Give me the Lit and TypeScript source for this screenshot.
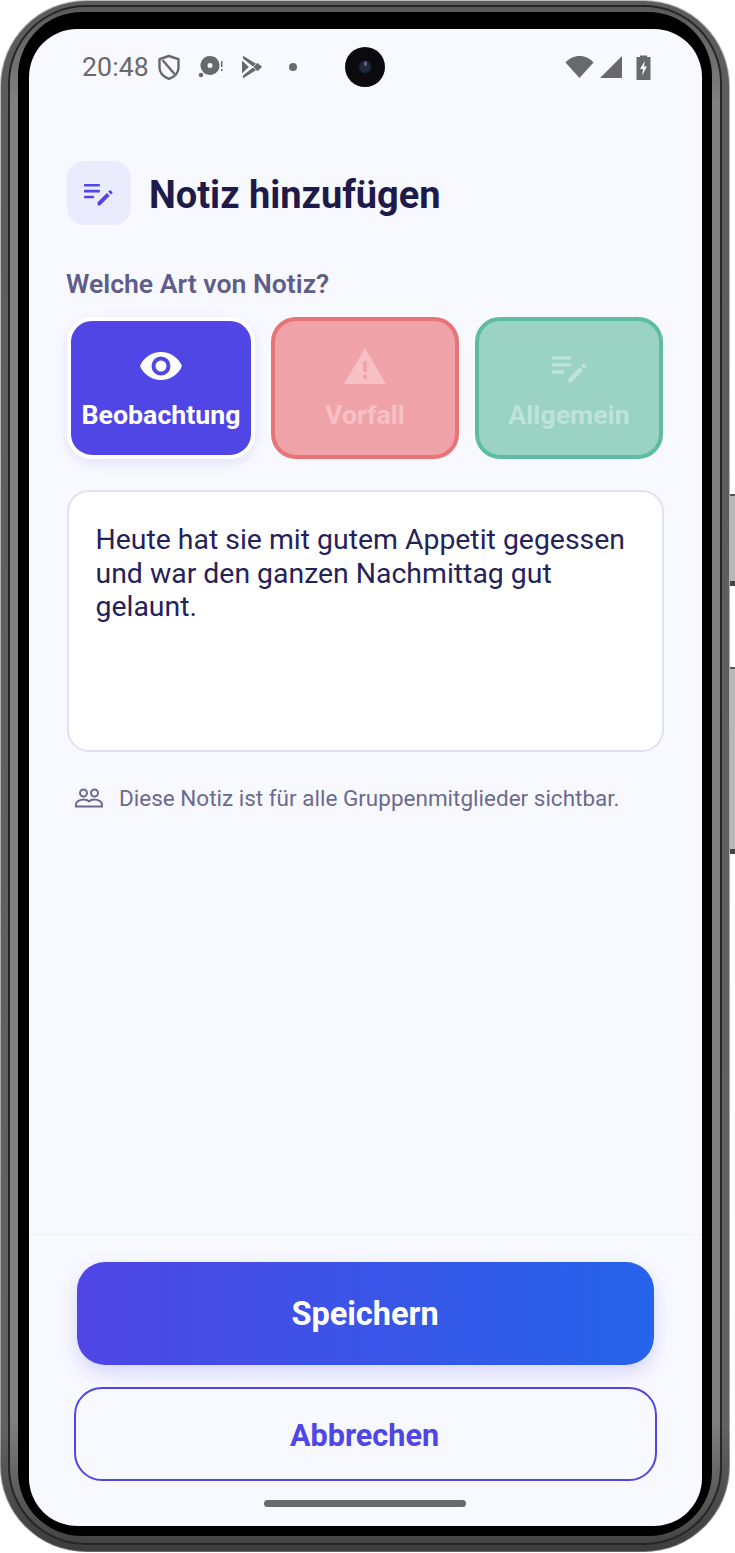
import { LitElement, html, css } from "lit";
import { customElement } from "lit/decorators.js";

const notesIcon = (cls: string) => html`<svg class=${cls} viewBox="0 0 32 25.500" fill="currentColor">
  <rect x="0" y="1" width="17.500" height="3" rx=".6"/><rect x="0" y="7.500" width="17.500" height="3" rx=".6"/><rect x="0" y="14" width="11" height="3" rx=".6"/>
  <path d="M15 24.400v-3l10.300-10.300 3.100 3.100L18 24.600c-.3.3-.6.4-1 .4h-1.500c-.3 0-.5-.3-.5-.6zM26.700 9.700l1.500-1.500c.4-.4 1-.4 1.400 0l1.700 1.700c.4.4.4 1 0 1.400l-1.500 1.500z"/>
</svg>`;

@customElement("app-root")
export class AppRoot extends LitElement {
  static styles = css`
    :host { display: block; width: 735px; height: 1553px; background: #fff; font-family: Roboto, "Liberation Sans", sans-serif; overflow: hidden; position: relative; }
    .phone { box-sizing: border-box; width: 730px; height: 1552px; padding: 1px; border-radius: 86px; background: linear-gradient(#bcbcbc, #a0a0a0 92%, #6a6a6a); }
    .r1 { box-sizing: border-box; height: 100%; padding: 4px 7px 6px; border-radius: 85px; background: linear-gradient(#5c5c5c, #626262 92%, #3c3c3c); }
    .r2 { box-sizing: border-box; height: 100%; padding: 2px; border-radius: 78px; background: #262626; }
    .r3 { box-sizing: border-box; height: 100%; padding: 5px 8px 7px; border-radius: 76px; background: linear-gradient(#5a5a5a, #808080 6%, #808080 92%, #444); }
    .r4 { box-sizing: border-box; height: 100%; padding: 17px 10px 10px 11px; border-radius: 64px; background: #000; }
    .side { position: absolute; left: 730px; width: 5px; background: #b8b8b8; border-top: 2px solid #555; border-bottom: 5px solid #444; box-sizing: border-box; }
    .side.a { top: 494px; height: 92px; }
    .side.b { top: 667px; height: 187px; }
    .screen { position: relative; height: 100%; box-sizing: border-box; border-radius: 48px; background: #f8f9ff; display: flex; flex-direction: column; overflow: hidden; }
    .status { height: 76px; display: flex; align-items: center; padding: 0 51px 0 53px; color: #69696b; flex: none; box-sizing: border-box; }
    .time { font-size: 26.700px; letter-spacing: .1px; width: 76px; }
    .st { display: block; fill: #69696b; flex: none; }
    .st.outline { fill: none; stroke: #69696b; stroke-width: 2.400; }
    .cam { position: absolute; left: 316px; top: 18px; width: 40px; height: 40px; border-radius: 50%; background: radial-gradient(circle at 50% 50%, #1e2a3a 0 5px, #0b0b10 7px, #0a0a0c 100%); }
    .cam::after { content: ""; position: absolute; left: 19px; top: 14px; width: 3px; height: 5px; border-radius: 2px; background: #6a5a8c; }
    .right { margin-left: auto; display: flex; align-items: center; gap: 5px; }
    .main { flex: 1; padding: 0 38px; display: flex; flex-direction: column; }
    .head { display: flex; align-items: center; gap: 19px; margin-top: 56px; }
    .badge { width: 64px; height: 64px; border-radius: 17px; background: #eaebfd; display: flex; align-items: center; justify-content: center; color: #4f46e5; }
    .i-head { width: 29px; height: 23px; margin-top: 3px; margin-left: -1px; }
    h1 { margin: 4px 0 0 -1px; font-size: 38px; font-weight: 700; color: #1e1b4b; line-height: 44px; }
    .label { margin-top: 41px; margin-left: -1px; font-size: 26.600px; font-weight: 600; line-height: 36px; color: #5f5d8a; }
    .cards { display: grid; grid-template-columns: repeat(3, 188px); gap: 16px; margin-top: 15px; }
    .card { box-sizing: border-box; height: 142px; border-radius: 25px; border: 4px solid; display: flex; flex-direction: column; align-items: center; font-size: 26.700px; font-weight: 700; line-height: 30px; }
    .card svg { display: block; }
    .cicon { height: 46px; margin-top: 22px; margin-bottom: 11px; display: flex; align-items: center; justify-content: center; }
    .card.on { background: #4f46e5; border-color: #fff; color: #fff; box-shadow: 0 4px 12px rgba(79,70,229,.13); }
    .card.red { background: #efa3a9; border-color: #e87478; color: #f6c0c4; }
    .card.green { background: #9ad3c2; border-color: #5fbd9f; color: #bfe3d8; }
    .i-eye { width: 42px; height: 30px; }
    .i-warn { width: 42px; height: 36px; }
    .i-note { width: 35px; height: 28px; margin-top: 6px; }
    .input { box-sizing: border-box; margin-top: 31px; height: 262px; border: 2.500px solid #e0e0f0; border-radius: 22px; background: #fff; padding: 31px 26.500px; font-size: 28.400px; line-height: 33.500px; color: #25225a; }
    .hint { margin-top: 31px; display: flex; align-items: center; gap: 16px; padding-left: 8px; font-size: 22.500px; line-height: 30px; color: #6b6a8e; }
    .i-group { width: 28px; height: 20px; flex: none; color: #6b6a8e; }
    .foot { flex: none; border-top: 1px solid #eff0f6; height: 292px; box-sizing: border-box; padding: 27px 48px 0; display: flex; flex-direction: column; align-items: stretch; }
    .save { height: 103px; padding: 1px 1px 0 0; box-sizing: border-box; border-radius: 28px; background: linear-gradient(90deg, #4f46e5, #2563eb); color: #fff; font-size: 32.500px; font-weight: 700; display: flex; align-items: center; justify-content: center; box-shadow: 0 8px 20px rgba(79,70,229,.2); }
    .cancel { box-sizing: border-box; height: 94px; margin: 22px -3px 0; padding: 2px 2px 0 0; border-radius: 28px; border: 2.500px solid #4f46e5; color: #4f46e5; font-size: 30.600px; font-weight: 700; display: flex; align-items: center; justify-content: center; }
    .home { width: 202px; height: 7px; border-radius: 4px; background: #69696b; margin: 19px auto 0; transform: translateX(-1px); }
  `;

  render() {
    return html`
      <div class="phone"><div class="r1"><div class="r2"><div class="r3"><div class="r4">
        <div class="screen">
          <div class="status">
            <span class="time">20:48</span>
            <svg class="st outline" style="margin-left:-1px" width="24" height="27" viewBox="0 0 24 27"><path d="M12 2l9.500 3.200v8c0 5.500-4 9.600-9.500 11.600C6.500 22.800 2.500 18.700 2.500 13.200v-8z" stroke-linejoin="round"/><path d="M5.500 6l12 14"/></svg>
            <svg class="st" style="margin-left:17px" width="26" height="24" viewBox="0 0 26 24"><path fill-rule="evenodd" d="M12 1a9.500 9.500 0 1 1 -6.700 16.200A9.500 9.500 0 0 1 12 1zm0 7a2.500 2.500 0 1 0 0 5 2.500 2.500 0 0 0 0-5z"/><circle cx="3" cy="20" r="2.300"/><rect x="23" y="6" width="1.500" height="6"/><rect x="23" y="14" width="1.500" height="2"/></svg>
            <svg class="st" style="margin-left:17px" width="22" height="24" viewBox="0 0 22 24"><path d="M1 5.500l6.800 6.500L1 18.500z"/><path d="M2.500 1L15 8.700l-3 2.800-9.500-7.500L1.500 2zM2.500 23L15 15.300l-3-2.800-9.500 7.500-1 2z"/><path d="M16.500 7.700l4.500 4.300-4.500 4.300-4-4.300z"/></svg>
            <svg class="st" style="margin-left:24px" width="12" height="12" viewBox="0 0 12 12"><circle cx="6" cy="6" r="4"/></svg>
            <div class="right">
              <svg class="st" width="29" height="24" viewBox="0 0 29 24"><path d="M.5 7.500C4 3.500 9 1 14.500 1S25 3.500 28.500 7.500L14.500 23z"/></svg>
              <svg class="st" width="24" height="24" viewBox="0 0 24 24"><path d="M1 23L23 1v22z"/></svg>
              <svg class="st" style="margin-left:8px" width="15" height="25" viewBox="0 0 15 25"><path fill-rule="evenodd" d="M4 2V.5h7V2h3.500v23H.5V2zM8.800 6L4 14h3l-.9 6.500L11 11.500H8z"/></svg>
            </div>
          </div>
          <div class="cam"></div>
          <div class="main">
            <div class="head">
              <div class="badge">${notesIcon("i-head")}</div>
              <h1>Notiz hinzufügen</h1>
            </div>
            <div class="label">Welche Art von Notiz?</div>
            <div class="cards">
              <div class="card on">
                <div class="cicon"><svg class="i-eye" viewBox="0 0 42 30" fill="currentColor"><path fill-rule="evenodd" d="M21 1c9.500 0 17.500 5.800 21 14-3.500 8.200-11.500 14-21 14S3.500 23.200 0 15C3.500 6.800 11.500 1 21 1zm0 4.500a9.500 9.500 0 1 0 0 19 9.500 9.500 0 0 0 0-19zm0 4a5.500 5.500 0 1 1 0 11 5.500 5.500 0 0 1 0-11z"/></svg></div>
                Beobachtung
              </div>
              <div class="card red">
                <div class="cicon"><svg class="i-warn" viewBox="0 0 42 36" fill="currentColor"><path fill-rule="evenodd" d="M21 0l21 36H0zM19.200 13v11h3.600V13zm0 14v4h3.600v-4z"/></svg></div>
                Vorfall
              </div>
              <div class="card green">
                <div class="cicon">${notesIcon("i-note")}</div>
                Allgemein
              </div>
            </div>
            <div class="input">Heute hat sie mit gutem Appetit gegessen und war den ganzen Nachmittag gut gelaunt.</div>
            <div class="hint">
              <svg class="i-group" viewBox="0 0 28 20" fill="none" stroke="currentColor" stroke-width="2"><circle cx="8.500" cy="5" r="3.500"/><circle cx="19.500" cy="5" r="3.500"/><path d="M1 18.500v-2c0-3 4-5 7.500-5 2.500 0 4.500.8 5.500 1.800 1-1 3-1.800 5.500-1.800 3.500 0 7.500 2 7.500 5v2z"/></svg>
              Diese Notiz ist für alle Gruppenmitglieder sichtbar.
            </div>
          </div>
          <div class="foot">
            <div class="save">Speichern</div>
            <div class="cancel">Abbrechen</div>
            <div class="home"></div>
          </div>
        </div>
      </div></div></div></div></div>
      <div class="side a"></div>
      <div class="side b"></div>
    `;
  }
}
